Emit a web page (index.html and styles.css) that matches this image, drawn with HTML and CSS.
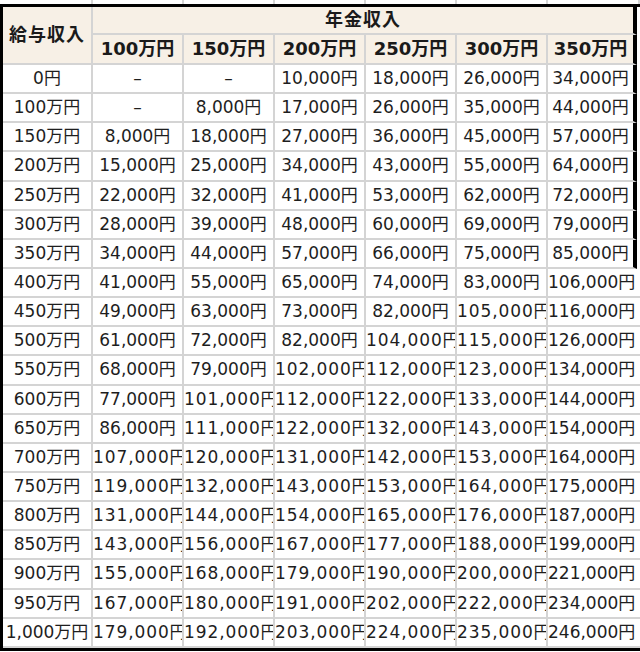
FILE: index.html
```html
<!DOCTYPE html>
<html lang="ja">
<head>
<meta charset="utf-8">
<title>給与収入と年金収入</title>
<link rel="stylesheet" href="styles.css">
</head>
<body>
<div class="strip"><i></i><i></i><i></i><i></i><i></i><i></i><i></i></div>
<div class="sheet">
  <div class="h corner">給与収入</div>
  <div class="h group edge">年金収入</div>
  <div class="h">100万円</div><div class="h">150万円</div><div class="h">200万円</div><div class="h">250万円</div><div class="h">300万円</div><div class="h edge">350万円</div>

  <div class="c">0円</div><div class="c">–</div><div class="c">–</div><div class="c">10,000円</div><div class="c">18,000円</div><div class="c">26,000円</div><div class="c edge">34,000円</div>
  <div class="c">100万円</div><div class="c">–</div><div class="c">8,000円</div><div class="c">17,000円</div><div class="c">26,000円</div><div class="c">35,000円</div><div class="c edge">44,000円</div>
  <div class="c">150万円</div><div class="c">8,000円</div><div class="c">18,000円</div><div class="c">27,000円</div><div class="c">36,000円</div><div class="c">45,000円</div><div class="c edge">57,000円</div>
  <div class="c">200万円</div><div class="c">15,000円</div><div class="c">25,000円</div><div class="c">34,000円</div><div class="c">43,000円</div><div class="c">55,000円</div><div class="c edge">64,000円</div>
  <div class="c">250万円</div><div class="c">22,000円</div><div class="c">32,000円</div><div class="c">41,000円</div><div class="c">53,000円</div><div class="c">62,000円</div><div class="c edge">72,000円</div>
  <div class="c">300万円</div><div class="c">28,000円</div><div class="c">39,000円</div><div class="c">48,000円</div><div class="c">60,000円</div><div class="c">69,000円</div><div class="c edge">79,000円</div>
  <div class="c">350万円</div><div class="c">34,000円</div><div class="c">44,000円</div><div class="c">57,000円</div><div class="c">66,000円</div><div class="c">75,000円</div><div class="c edge">85,000円</div>
  <div class="c">400万円</div><div class="c">41,000円</div><div class="c">55,000円</div><div class="c">65,000円</div><div class="c">74,000円</div><div class="c">83,000円</div><div class="c last">106,000円</div>
  <div class="c">450万円</div><div class="c">49,000円</div><div class="c">63,000円</div><div class="c">73,000円</div><div class="c">82,000円</div><div class="c w">105,000円</div><div class="c last">116,000円</div>
  <div class="c">500万円</div><div class="c">61,000円</div><div class="c">72,000円</div><div class="c">82,000円</div><div class="c w">104,000円</div><div class="c w">115,000円</div><div class="c last">126,000円</div>
  <div class="c">550万円</div><div class="c">68,000円</div><div class="c">79,000円</div><div class="c w">102,000円</div><div class="c w">112,000円</div><div class="c w">123,000円</div><div class="c last">134,000円</div>
  <div class="c">600万円</div><div class="c">77,000円</div><div class="c w">101,000円</div><div class="c w">112,000円</div><div class="c w">122,000円</div><div class="c w">133,000円</div><div class="c last">144,000円</div>
  <div class="c">650万円</div><div class="c">86,000円</div><div class="c w">111,000円</div><div class="c w">122,000円</div><div class="c w">132,000円</div><div class="c w">143,000円</div><div class="c last">154,000円</div>
  <div class="c">700万円</div><div class="c w">107,000円</div><div class="c w">120,000円</div><div class="c w">131,000円</div><div class="c w">142,000円</div><div class="c w">153,000円</div><div class="c last">164,000円</div>
  <div class="c">750万円</div><div class="c w">119,000円</div><div class="c w">132,000円</div><div class="c w">143,000円</div><div class="c w">153,000円</div><div class="c w">164,000円</div><div class="c last">175,000円</div>
  <div class="c">800万円</div><div class="c w">131,000円</div><div class="c w">144,000円</div><div class="c w">154,000円</div><div class="c w">165,000円</div><div class="c w">176,000円</div><div class="c last">187,000円</div>
  <div class="c">850万円</div><div class="c w">143,000円</div><div class="c w">156,000円</div><div class="c w">167,000円</div><div class="c w">177,000円</div><div class="c w">188,000円</div><div class="c last">199,000円</div>
  <div class="c">900万円</div><div class="c w">155,000円</div><div class="c w">168,000円</div><div class="c w">179,000円</div><div class="c w">190,000円</div><div class="c w">200,000円</div><div class="c last">221,000円</div>
  <div class="c">950万円</div><div class="c w">167,000円</div><div class="c w">180,000円</div><div class="c w">191,000円</div><div class="c w">202,000円</div><div class="c w">222,000円</div><div class="c last">234,000円</div>
  <div class="c">1,000万円</div><div class="c w">179,000円</div><div class="c w">192,000円</div><div class="c w">203,000円</div><div class="c w">224,000円</div><div class="c w">235,000円</div><div class="c last">246,000円</div>
</div>
</body>
</html>
```
FILE: styles.css
```css
html, body {
  margin: 0;
  padding: 0;
  background: #ffffff;
}
body {
  width: 640px;
  height: 652px;
  overflow: hidden;
  font-family: "DejaVu Sans", "Noto Sans CJK JP", sans-serif;
  color: #1e1e1e;
}
.strip {
  display: grid;
  grid-template-columns: 90px 91px 91px 91px 91px 91px 92px;
  height: 4px;
  margin-left: 3px;
}
.strip i {
  border-right: 2px solid #d6d6d6;
}
.sheet {
  display: grid;
  width: 637px;
  grid-template-columns: 90px 91px 91px 91px 91px 91px 92px;
  grid-template-rows: 28px 30px repeat(20, 29.15px);
  border-left: 3px solid #000;
  border-top: 3px solid #000;
  border-bottom: 3px solid #000;
}
.sheet > div {
  box-sizing: border-box;
  border-right: 2px solid #d4d4d4;
  border-bottom: 2px solid #d4d4d4;
  white-space: nowrap;
  overflow: hidden;
  text-align: center;
  min-width: 0;
}
.h {
  background: #f7f0e6;
  font-weight: bold;
  font-size: 18px;
  line-height: 28px;
  color: #1a1a1a;
}
.corner {
  grid-row: span 2;
  display: flex;
  align-items: center;
  justify-content: center;
  letter-spacing: 1px;
}
.group {
  grid-column: span 6;
  line-height: 26px;
  letter-spacing: 1px;
}
.c {
  font-size: 17px;
  line-height: 27px;
}
.edge {
  margin-right: 3px;
  border-right: 4px solid #000 !important;
}
.w {
  text-align: left !important;
  letter-spacing: 0.9px;
}
.last {
  text-align: left !important;
  overflow: visible !important;
  border-right: none !important;
}
```
